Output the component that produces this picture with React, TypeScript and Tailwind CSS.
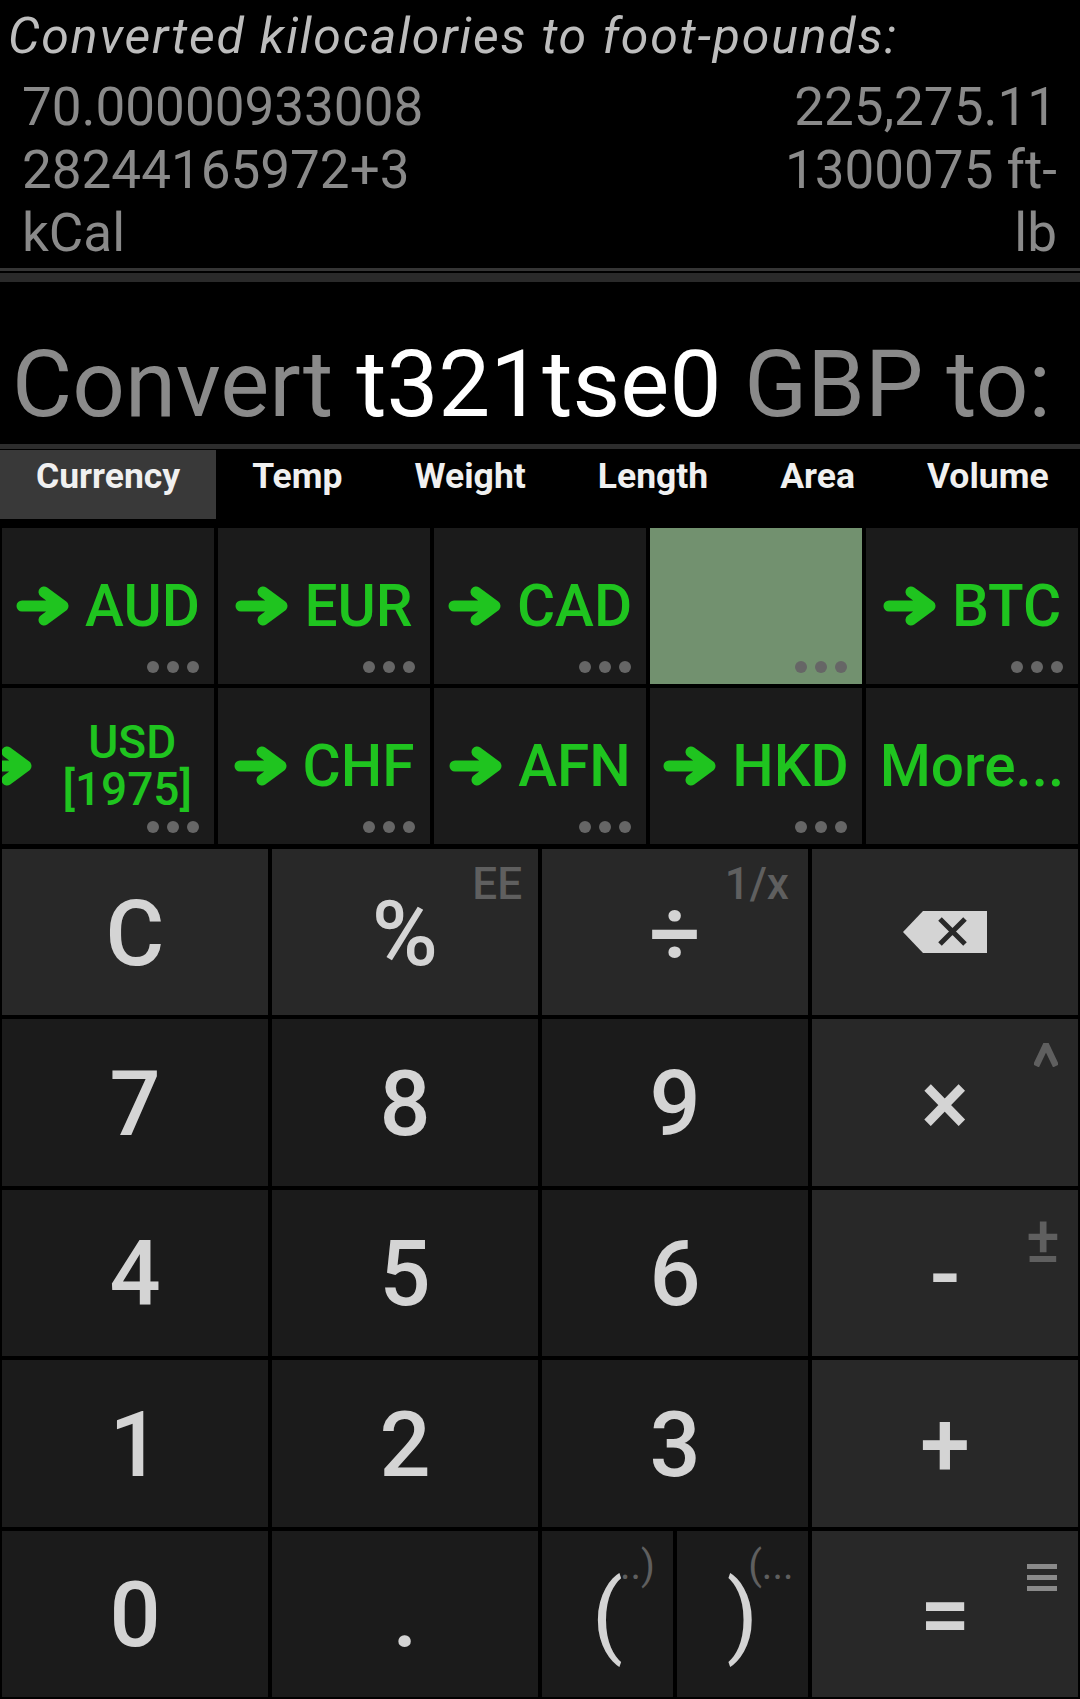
import React from "react";

function Arrow() {
  return (
    <svg width="53" height="40" viewBox="0 0 53 40" className="shrink-0">
      <path
        d="M6 20H45M28 6L47 20L28 34"
        fill="none"
        stroke="#1fc41f"
        strokeWidth="11"
        strokeLinecap="round"
        strokeLinejoin="round"
      />
    </svg>
  );
}

function Dots() {
  return (
    <div className="absolute right-[15px] bottom-[11px] flex gap-[8px]">
      {[0, 1, 2].map((i) => (
        <span key={i} className="block h-[12px] w-[12px] rounded-full bg-[#666666]" />
      ))}
    </div>
  );
}

function Cur({ label, hi, dots = true, arrow = true }: { label?: string; hi?: boolean; dots?: boolean; arrow?: boolean }) {
  return (
    <div className={`relative flex items-center justify-center overflow-hidden ${hi ? "bg-[#72916f]" : "bg-[#1b1b1b]"}`}>
      {label && (
        <div className="flex shrink-0 items-center gap-[16px]">
          {arrow && <Arrow />}
          <span className="text-[58.5px] font-medium leading-none text-[#1fc41f] whitespace-nowrap">{label}</span>
        </div>
      )}
      {dots && <Dots />}
    </div>
  );
}

function Key({ children, light, sup }: { children: React.ReactNode; light?: boolean; sup?: React.ReactNode }) {
  return (
    <div className={`relative flex items-center justify-center pt-[5px] ${light ? "bg-[#282828]" : "bg-[#1b1b1b]"}`}>
      <span className="text-[90px] font-medium leading-none text-[#d4d4d4]">{children}</span>
      {sup}
    </div>
  );
}

const supCls = "absolute text-[44px] font-medium leading-none text-[#5f5f5f]";

export default function App() {
  const tabs = ["Currency", "Temp", "Weight", "Length", "Area", "Volume"];
  return (
    <div className="flex h-[1699px] w-[1080px] flex-col overflow-hidden bg-black [font-family:Roboto,'Noto_Sans',sans-serif]">
      {/* Result */}
      <div className="shrink-0">
        <div className="pl-[8px] pt-[7px] text-[50px] italic leading-[59px] tracking-[1.8px] text-[#bdbdbd] whitespace-nowrap">
          Converted kilocalories to foot-pounds:
        </div>
        <div className="mt-[10px] flex justify-between pl-[22px] pr-[23px] text-[53px] leading-[63px] text-[#8a8a8a]">
          <div>
            70.00000933008
            <br />
            28244165972+3
            <br />
            kCal
          </div>
          <div className="text-right">
            225,275.11
            <br />
            1300075 ft-
            <br />
            lb
          </div>
        </div>
        <div className="mt-[3px] h-[3px] bg-[#353535]" />
        <div className="mt-[2px] h-[9px] bg-[#2a2a2a]" />
      </div>

      {/* Convert header */}
      <div className="h-[162px] shrink-0 overflow-hidden whitespace-nowrap pl-[12px] pt-[47px] text-[92.5px] leading-[111px] text-[#8a8a8a]">
        Convert <span className="text-white">t321tse0</span> GBP to:
      </div>
      <div className="h-[5px] shrink-0 bg-[#2d2d2d]" />

      {/* Tabs */}
      <div className="flex h-[71px] shrink-0 items-center overflow-hidden">
        {tabs.map((t, i) => (
          <div
            key={t}
            className={`flex h-[69px] shrink-0 items-start px-[36px] pt-[9px] text-[35.5px] font-bold leading-none text-[#f0f0f0] ${
              i === 0 ? "bg-[#393939]" : ""
            }`}
          >
            {t}
          </div>
        ))}
      </div>

      {/* Currency grid */}
      <div className="grid shrink-0 grid-cols-5 grid-rows-[156px_156px] gap-[4px] px-[2px] pt-[8px]">
        <Cur label="AUD" />
        <Cur label="EUR" />
        <Cur label="CAD" />
        <Cur hi />
        <Cur label="BTC" />
        <div className="relative flex items-center justify-end overflow-hidden bg-[#1b1b1b] pr-[22px]">
          <div className="flex shrink-0 items-center gap-[30px]">
            <Arrow />
            <div className="text-center text-[46px] font-medium leading-[47px] text-[#1fc41f]">
              <div className="pl-[10px]">USD</div>
              <div>[1975]</div>
            </div>
          </div>
          <Dots />
        </div>
        <Cur label="CHF" />
        <Cur label="AFN" />
        <Cur label="HKD" />
        <Cur label="More..." arrow={false} dots={false} />
      </div>

      {/* Keypad */}
      <div className="grid flex-1 grid-cols-4 grid-rows-5 gap-[4px] px-[2px] pt-[5px] pb-[2px]">
        <Key light>C</Key>
        <Key light sup={<span className={`${supCls} right-[16px] top-[13px]`}>EE</span>}>%</Key>
        <Key light sup={<span className={`${supCls} right-[19px] top-[13px]`}>1/x</span>}>÷</Key>
        <div className="flex items-center justify-center bg-[#282828]">
          <svg width="84" height="42" viewBox="0 0 84 42">
            <path d="M0 21L20 0H84V42H20Z" fill="#d4d4d4" />
            <path d="M37 8L62 33M62 8L37 33" stroke="#282828" strokeWidth="5" />
          </svg>
        </div>

        <Key>7</Key>
        <Key>8</Key>
        <Key>9</Key>
        <Key
          light
          sup={
            <svg width="24" height="24" viewBox="0 0 24 24" className="absolute right-[20px] top-[24px]">
              <path d="M2 23L12 2L22 23" fill="none" stroke="#5f5f5f" strokeWidth="6.5" strokeLinejoin="miter" />
            </svg>
          }
        >
          ×
        </Key>

        <Key>4</Key>
        <Key>5</Key>
        <Key>6</Key>
        <Key light sup={<span className={`${supCls} right-[18px] top-[19px] text-[64px]`}>±</span>}>-</Key>

        <Key>1</Key>
        <Key>2</Key>
        <Key>3</Key>
        <Key light>+</Key>

        <Key>0</Key>
        <Key>.</Key>
        <div className="flex gap-[4px]">
          <div className="flex flex-1 items-center justify-center bg-[#1b1b1b] pt-[5px]">
            <span className="relative text-[90px] font-normal leading-none text-[#d4d4d4]">
              (
              <span className="absolute left-[calc(100%-3px)] top-[-25px] text-[40px] leading-none text-[#5f5f5f]">..)</span>
            </span>
          </div>
          <div className="flex flex-1 items-center justify-center bg-[#1b1b1b] pt-[5px]">
            <span className="relative text-[90px] font-normal leading-none text-[#d4d4d4]">
              )
              <span className="absolute left-[calc(100%-10px)] top-[-25px] text-[40px] leading-none text-[#5f5f5f] whitespace-nowrap">(...</span>
            </span>
          </div>
        </div>
        <Key
          light
          sup={
            <svg width="30" height="27" viewBox="0 0 30 27" className="absolute right-[21px] top-[33px]">
              <rect x="0" y="0" width="30" height="5" fill="#8a8a8a" />
              <rect x="0" y="11" width="30" height="5" fill="#8a8a8a" />
              <rect x="0" y="22" width="30" height="5" fill="#8a8a8a" />
            </svg>
          }
        >
          =
        </Key>
      </div>
    </div>
  );
}
